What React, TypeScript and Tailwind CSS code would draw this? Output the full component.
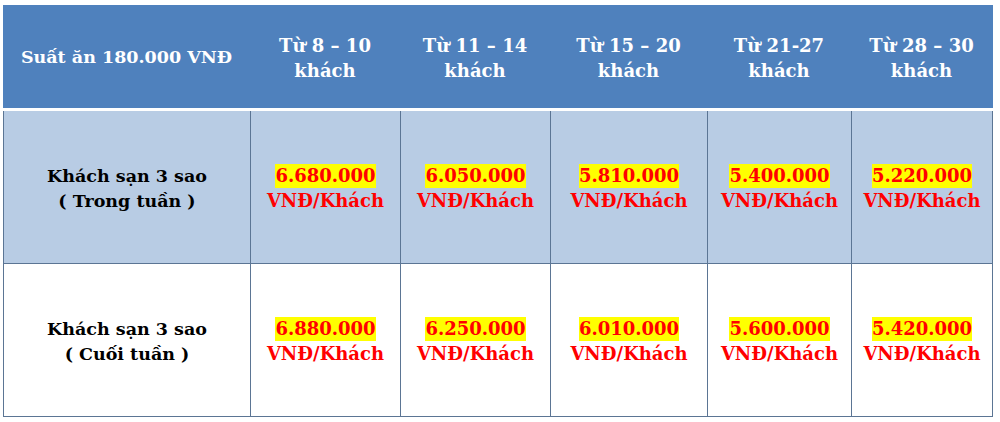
import React from "react";

const heads = ["Từ 8 – 10", "Từ 11 – 14", "Từ 15 – 20", "Từ 21-27", "Từ 28 – 30"];
const rows = [
  { label: "( Trong tuần )", prices: ["6.680.000", "6.050.000", "5.810.000", "5.400.000", "5.220.000"], bg: "bg-[#b8cce4]" },
  { label: "( Cuối tuần )", prices: ["6.880.000", "6.250.000", "6.010.000", "5.600.000", "5.420.000"], bg: "bg-white" },
];
const cols = "grid grid-cols-[247px_150px_150px_157px_144px_141px]";

export default function App() {
  return (
    <div className="w-[1000px] h-[422px] bg-white pl-[3px] pt-[5px]" style={{ fontFamily: '"DejaVu Serif", "Liberation Serif", serif' }}>
      <div className="w-[990px] font-bold">
        <div className={`${cols} h-[106px] bg-[#4f81bd] border-b-[3px] border-white text-white text-[18px] leading-[25px]`}>
          <div className="flex items-center justify-center pt-[2px] text-[17.5px]">Suất ăn 180.000 VNĐ</div>
          {heads.map((h) => (
            <div key={h} className="flex flex-col items-center justify-center pt-[2px]">
              <span>{h}</span>
              <span>khách</span>
            </div>
          ))}
        </div>
        {rows.map((r, i) => (
          <div key={i} className={`${cols} ${r.bg} h-[153px] border-b border-l border-[#5b7594] text-[18px] leading-[25px]`}>
            <div className="flex flex-col items-center justify-center pt-[3px] border-r border-[#5b7594] text-black text-[17.5px]">
              <span>Khách sạn 3 sao</span>
              <span>{r.label}</span>
            </div>
            {r.prices.map((p, j) => (
              <div key={j} className="flex flex-col items-center justify-center pt-[3px] border-r border-[#5b7594] text-[#ff0000]">
                <span className="bg-[#ffff00] leading-[24px]">{p}</span>
                <span>VNĐ/Khách</span>
              </div>
            ))}
          </div>
        ))}
      </div>
    </div>
  );
}
